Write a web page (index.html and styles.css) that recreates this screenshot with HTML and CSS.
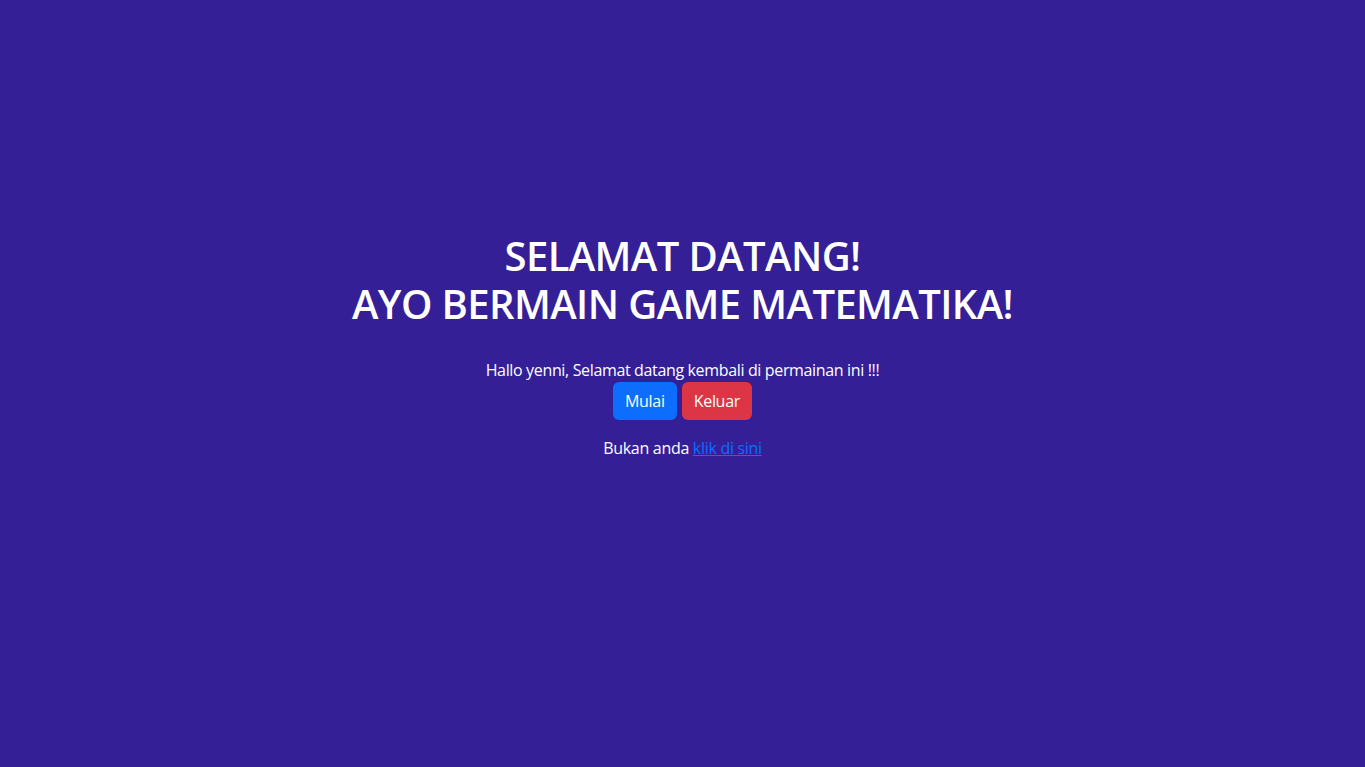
FILE: index.html
```html
<!DOCTYPE html>
<html lang="id">
<head>
<meta charset="utf-8">
<title>Game Matematika</title>
<link rel="stylesheet" href="styles.css">
</head>
<body>
<main class="welcome">
  <h1 class="title"><span class="title-line">SELAMAT DATANG!</span><span class="title-line">AYO BERMAIN GAME MATEMATIKA!</span></h1>
  <p class="greeting">Hallo yenni, Selamat datang kembali di permainan ini !!!</p>
  <div class="actions">
    <a class="btn btn-primary" href="#">Mulai</a>
    <a class="btn btn-danger" href="#">Keluar</a>
  </div>
  <p class="notyou">Bukan anda <a class="link" href="#">klik di sini</a></p>
</main>
</body>
</html>
```
FILE: styles.css
```css
html, body {
  margin: 0;
  padding: 0;
}
body {
  background: #341f97;
  color: #fff;
  font-family: "Open Sans", "Noto Sans", sans-serif;
  font-size: 16px;
  line-height: 24px;
  min-height: 100vh;
}
.welcome {
  text-align: center;
  padding-top: 232px;
}
.title {
  margin: 0 0 30px;
  font-size: 40px;
  line-height: 48px;
  font-weight: 600;
  letter-spacing: -0.6px;
}
.title-line {
  display: block;
}
.greeting {
  margin: 0;
  letter-spacing: -0.35px;
}
.actions {
  display: flex;
  justify-content: center;
  gap: 5px;
}
.btn {
  display: inline-block;
  padding: 7px 12px;
  line-height: 24px;
  border-radius: 6px;
  color: #fff;
  text-decoration: none;
  font-size: 16px;
  letter-spacing: -0.3px;
}
.btn-primary { background: #0d6efd; }
.btn-danger { background: #dc3545; }
.notyou {
  margin: 16px 0 0;
  letter-spacing: -0.3px;
}
.link {
  color: #0d6efd;
  text-decoration: underline;
}
```
